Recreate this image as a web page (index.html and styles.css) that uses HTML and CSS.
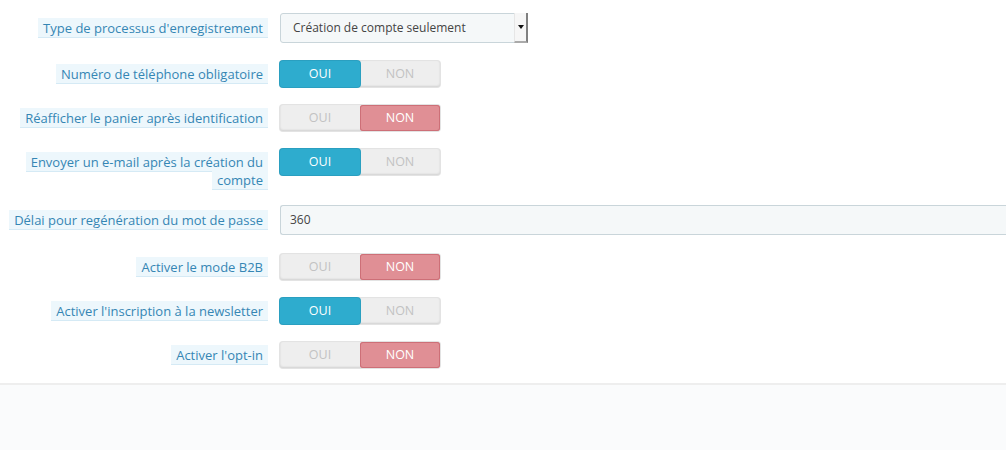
FILE: index.html
```html
<!DOCTYPE html>
<html>
 <head>
  <meta charset="utf-8">
  <title>Options clients</title>
  <link rel="stylesheet" href="styles.css">
 </head>
 <body>
  <div class="panel">
   <div class="row">
    <div class="label pad6"><span class="hint">Type de processus d'enregistrement</span></div>
    <div class="ctrl">
     <div class="select">Création de compte seulement<span class="arrow"></span></div>
    </div>
   </div>

   <div class="row">
    <div class="label"><span class="hint">Numéro de téléphone obligatoire</span></div>
    <div class="ctrl">
     <div class="switch"><span class="on yes">OUI</span><span>NON</span></div>
    </div>
   </div>

   <div class="row">
    <div class="label"><span class="hint">Réafficher le panier après identification</span></div>
    <div class="ctrl">
     <div class="switch"><span>OUI</span><span class="on no">NON</span></div>
    </div>
   </div>

   <div class="row tall">
    <div class="label"><span class="hint">Envoyer un e-mail après la création du compte</span></div>
    <div class="ctrl">
     <div class="switch"><span class="on yes">OUI</span><span>NON</span></div>
    </div>
   </div>

   <div class="row wide">
    <div class="label pad6"><span class="hint">Délai pour regénération du mot de passe</span></div>
    <div class="ctrl">
     <div class="input">360</div>
    </div>
   </div>

   <div class="row">
    <div class="label"><span class="hint">Activer le mode B2B</span></div>
    <div class="ctrl">
     <div class="switch"><span>OUI</span><span class="on no">NON</span></div>
    </div>
   </div>

   <div class="row">
    <div class="label"><span class="hint">Activer l'inscription à la newsletter</span></div>
    <div class="ctrl">
     <div class="switch"><span class="on yes">OUI</span><span>NON</span></div>
    </div>
   </div>

   <div class="row">
    <div class="label"><span class="hint">Activer l'opt-in</span></div>
    <div class="ctrl">
     <div class="switch"><span>OUI</span><span class="on no">NON</span></div>
    </div>
   </div>
  </div>
  <div class="footer"></div>
 </body>
</html>
```

FILE: styles.css
```css
body {
  margin:0;
  font-family:"Open Sans", "Liberation Sans", sans-serif;
  font-size:12px;
  color:#555;
  background-color:#fff;
  width:1006px;
  overflow:hidden;
}

.panel {
  padding-top:13px;
  padding-bottom:15px;
}

.row {
  display:grid;
  grid-template-columns:268px 1fr;
  column-gap:12px;
  margin-bottom:18px;
}

.row:last-child {
  margin-bottom:0;
}

.row.tall {
  margin-bottom:16px;
}

.row.wide {
  margin-bottom:19px;
}

.label {
  text-align:right;
  padding-top:4px;
  padding-left:6px;
  line-height:18px;
  font-size:13px;
}

.label.pad6 {
  padding-top:6px;
}

.hint {
  background-color:#edf7fc;
  border-bottom:1px solid #d5eaf5;
  color:#3586b4;
  padding:1px 5px 0px 5px;
  box-decoration-break:clone;
  -webkit-box-decoration-break:clone;
}

.select {
  position:relative;
  width:248px;
  height:30px;
  box-sizing:border-box;
  border:1px solid #c9d5da;
  border-radius:3px;
  background-color:#f5f8f9;
  line-height:28px;
  padding-left:12px;
  color:#444;
}

.arrow {
  position:absolute;
  right:-1px;
  top:-1px;
  width:14px;
  height:30px;
  box-sizing:border-box;
  background-color:#f6f6f6;
  border-left:1px solid #e6e6e6;
  border-right:2px solid #808080;
  border-bottom:2px solid #aaa;
}

.arrow:after {
  content:"";
  position:absolute;
  left:3px;
  top:12px;
  border-left:3px solid transparent;
  border-right:3px solid transparent;
  border-top:4px solid #111;
}

.input {
  height:30px;
  box-sizing:border-box;
  border:1px solid #c9d5da;
  border-right:none;
  border-radius:3px 0 0 3px;
  background-color:#f5f8f9;
  line-height:28px;
  padding-left:9px;
  color:#444;
  margin-right:-10px;
}

.switch {
  display:flex;
  width:160px;
  height:26px;
  box-sizing:border-box;
  border-radius:3px;
  background-color:#eeeeee;
  box-shadow:inset 0 -1px 2px rgba(0,0,0,0.12), 0 0 0 1px #e3e3e3;
}

.switch span {
  flex:1;
  text-align:center;
  line-height:26px;
  font-size:12.5px;
  color:#c2c2c2;
  border-radius:3px;
}

.switch .yes {
  background-color:#2eacce;
  color:#fff;
  box-shadow:0 0 0 1px #2a9fc0;
}

.switch .no {
  background-color:#e08f95;
  color:#fff;
  box-shadow:inset 0 0 0 1px #cd6f77;
}

.footer {
  border-top:2px solid #eeeeee;
  background-color:#fafbfc;
  height:100px;
}
```
